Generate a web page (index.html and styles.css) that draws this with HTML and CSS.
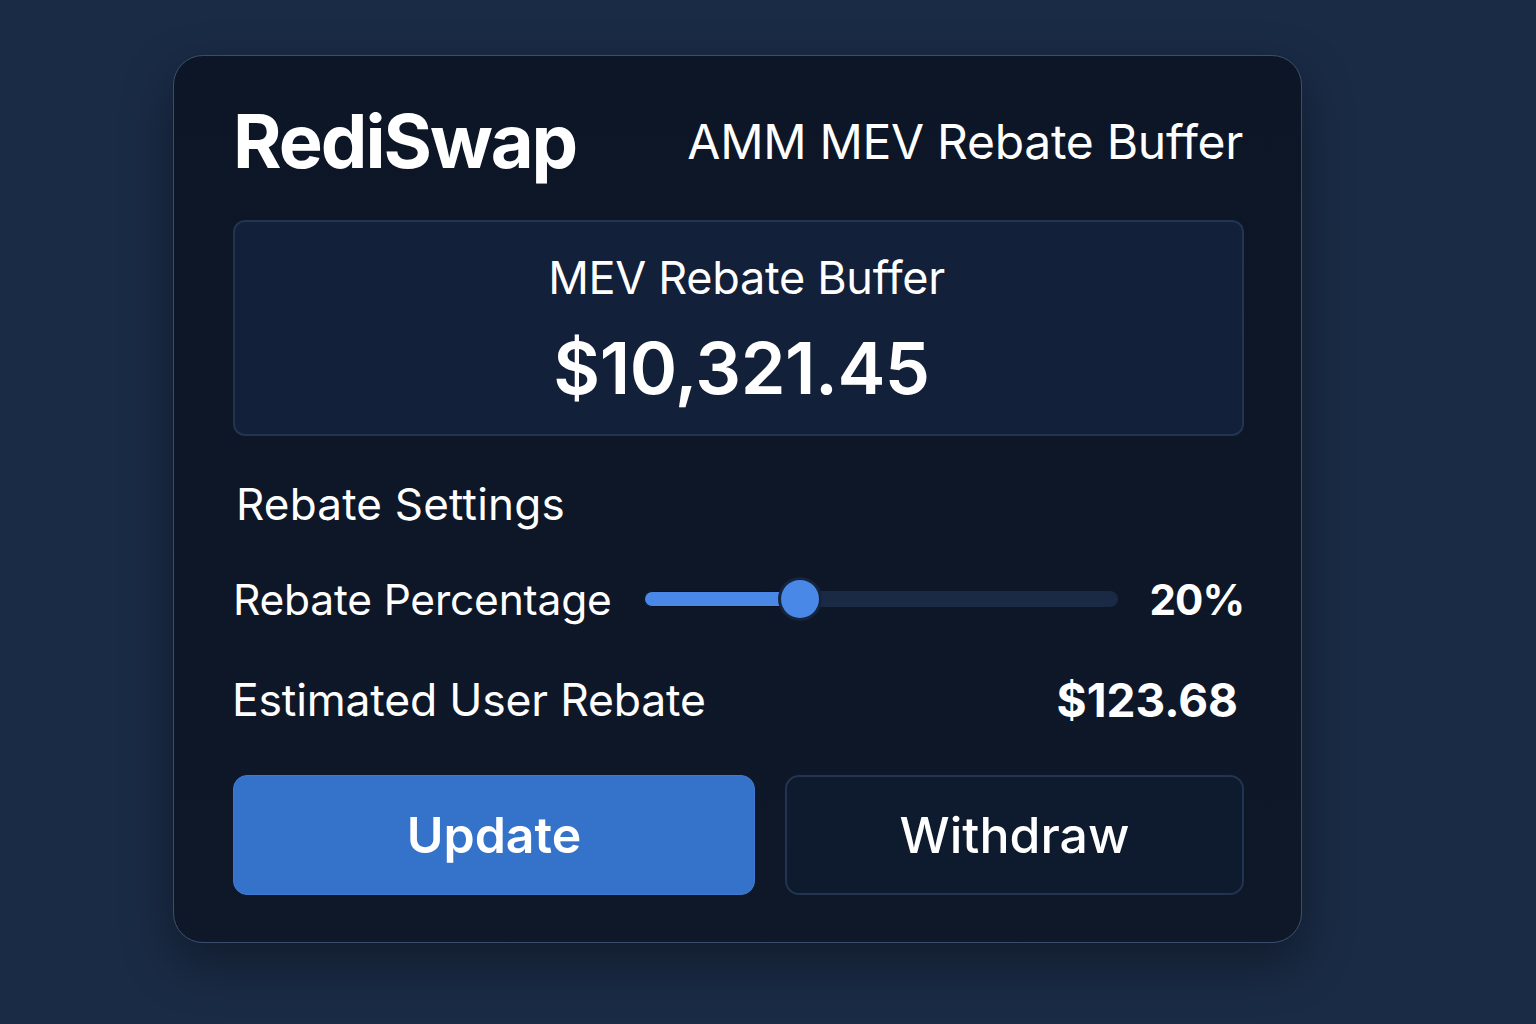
FILE: index.html
```html
<!DOCTYPE html>
<html lang="en">

<head>
    <meta charset="UTF-8">
    <meta name="viewport" content="width=device-width, initial-scale=1.0">
    <title>RediSwap - AMM MEV Rebate Buffer</title>
    <link rel="stylesheet" href="styles.css">
</head>

<body>
    <div class="card">
        <div class="header">
            <h1 class="logo">RediSwap</h1>
            <span class="subtitle">AMM MEV Rebate Buffer</span>
        </div>

        <div class="buffer-box">
            <div class="buffer-label">MEV Rebate Buffer</div>
            <div class="buffer-value">$10,321.45</div>
        </div>

        <h2 class="section-title">Rebate Settings</h2>

        <div class="row">
            <span class="row-label">Rebate Percentage</span>
            <div class="slider">
                <div class="slider-fill" style="width: 33%"></div>
                <div class="slider-thumb" style="left: 33%"></div>
            </div>
            <span class="row-value">20%</span>
        </div>

        <div class="row">
            <span class="row-label">Estimated User Rebate</span>
            <span class="row-value">$123.68</span>
        </div>

        <div class="buttons">
            <button class="btn btn-primary">Update</button>
            <button class="btn btn-outline">Withdraw</button>
        </div>
    </div>
</body>

</html>
```

FILE: styles.css
```css
body {
    margin: 0;
    padding: 55px 0 0 173px;
    min-height: 1024px;
    box-sizing: border-box;
    background: linear-gradient(180deg, #1a2b46 0%, #1a2b45 100%);
    font-family: Inter, "Noto Sans", sans-serif;
    color: #ffffff;
}

.card {
    width: 1129px;
    box-sizing: border-box;
    padding: 40px 57px 47px 59px;
    background: linear-gradient(180deg, #0c1626 0%, #0e1829 100%);
    border: 1px solid #3a4d6b;
    border-radius: 30px;
    box-shadow: 0 20px 50px rgba(0, 0, 0, 0.35);
}

.header {
    display: flex;
    align-items: center;
    justify-content: space-between;
    margin-bottom: 34px;
}

.logo {
    margin: 0;
    font-size: 74px;
    font-weight: 700;
    letter-spacing: -2px;
    line-height: 90px;
}

.subtitle {
    font-size: 48px;
    font-weight: 400;
    letter-spacing: -0.3px;
    padding-right: 1px;
}

.buffer-box {
    background: #122039;
    border: 2px solid #22344f;
    border-radius: 12px;
    height: 216px;
    box-sizing: border-box;
    display: flex;
    flex-direction: column;
    align-items: center;
    padding-top: 27px;
}

.buffer-label {
    font-size: 45px;
    line-height: 58px;
    letter-spacing: -0.3px;
    margin-left: 16px;
}

.buffer-value {
    font-size: 72px;
    font-weight: 600;
    line-height: 80px;
    margin-top: 21px;
    letter-spacing: -0.5px;
    margin-left: 6px;
}

.section-title {
    margin: 42px 0 0 3px;
    font-size: 44px;
    font-weight: 400;
    line-height: 52px;
    letter-spacing: 0.2px;
}

.row {
    display: flex;
    align-items: center;
    gap: 32px;
    height: 60px;
    margin-top: 39px;
}

.row + .row {
    margin-top: 41px;
}

.row-label {
    font-size: 42.5px;
    letter-spacing: -0.2px;
    flex: 1;
    white-space: nowrap;
}

.row + .row .row-label {
    font-size: 44.5px;
    margin-left: -1px;
}

.slider .slider-fill,
.slider .slider-thumb {
    position: absolute;
}

.row .slider {
    flex: 0 0 474px;
    height: 16px;
    background: #1a2a44;
    border-radius: 8px;
    position: relative;
}

.slider-fill {
    top: 0;
    left: 0;
    height: 16px;
    background: #4a88e8;
    border-radius: 8px;
    border: 1px solid #0a1220;
    box-sizing: border-box;
}

.slider-thumb {
    top: 50%;
    width: 38px;
    height: 38px;
    margin: -19px 0 0 -19px;
    background: #4a88e8;
    border-radius: 50%;
    box-shadow: 0 0 0 3px #16253e;
}

.row-value {
    font-size: 46px;
    font-weight: 700;
    text-align: right;
    padding-right: 6px;
}

.row .slider + .row-value {
    font-size: 42px;
    letter-spacing: -1px;
    width: 96px;
    padding-right: 5px;
    box-sizing: border-box;
    white-space: nowrap;
}

.buttons {
    display: grid;
    grid-template-columns: 522px 1fr;
    gap: 30px;
    margin-top: 45px;
}

.btn {
    height: 120px;
    border-radius: 14px;
    font-family: Inter, "Noto Sans", sans-serif;
    font-size: 50px;
    color: #ffffff;
    cursor: pointer;
}

.btn-primary {
    background: #3572c9;
    border: 1px solid #3f7ad0;
    font-weight: 600;
}

.btn-outline {
    background: #0e1a2d;
    border: 2px solid #22344f;
    font-weight: 500;
}
```
